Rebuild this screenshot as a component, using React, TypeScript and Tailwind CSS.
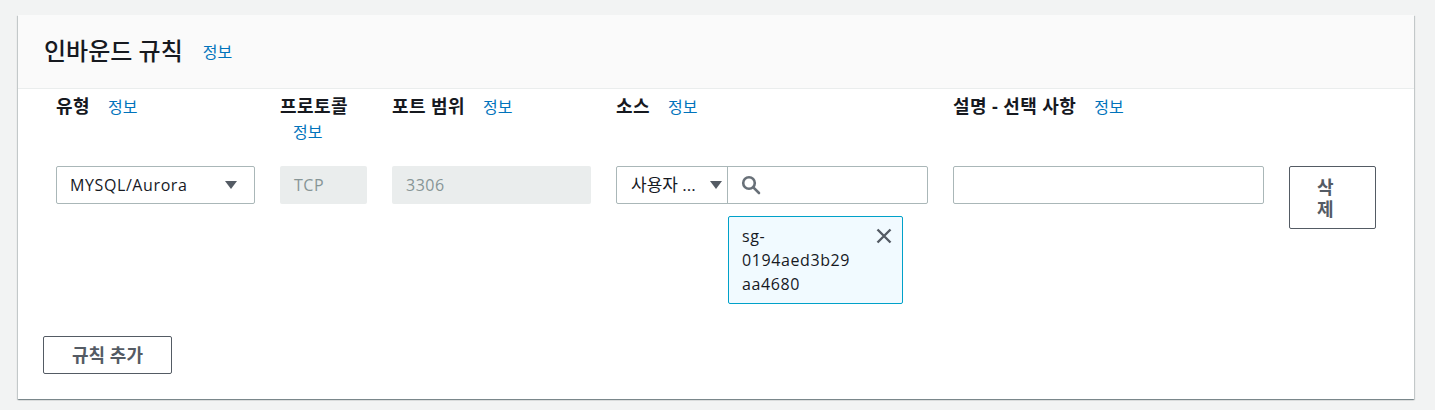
import React from "react";

const font = { fontFamily: '"Open Sans", "Noto Sans CJK KR", sans-serif' };

function InfoLink({ className = "" }: { className?: string }) {
  return (
    <a className={`inline-block text-[16px] font-normal text-[#0073bb] ${className}`}>정보</a>
  );
}

function Caret() {
  return (
    <svg width="12" height="9" viewBox="0 0 12 9" className="shrink-0">
      <path d="M0 0h12L6 8z" fill="#545b64" />
    </svg>
  );
}

function SearchIcon() {
  return (
    <svg width="20" height="20" viewBox="0 0 20 20" fill="none" stroke="#687078" strokeWidth="2.6">
      <circle cx="8" cy="8" r="5.8" />
      <path d="M12.3 12.3L18 18" strokeLinecap="round" />
    </svg>
  );
}

function CloseIcon() {
  return (
    <svg width="16" height="16" viewBox="0 0 16 16" fill="none" stroke="#545b64" strokeWidth="2.4">
      <path d="M1.5 1.5l13 13M14.5 1.5l-13 13" />
    </svg>
  );
}

export default function App() {
  return (
    <div className="h-[410px] bg-[#f2f3f3] pt-[15px] pl-[18px] pr-[21px] text-[#16191f]" style={font}>
      <div className="bg-white shadow-[0_1px_1px_0_rgba(0,28,36,0.3),1px_1px_1px_0_rgba(0,28,36,0.15),-1px_1px_1px_0_rgba(0,28,36,0.15)]">
        {/* Header */}
        <div className="flex h-[74px] items-center border-b border-[#eaeded] bg-[#fafafa] px-[26px] pb-[2px]">
          <h2 className="text-[24px] font-medium leading-[30px]">인바운드 규칙</h2>
          <InfoLink className="ml-[20px] mt-[2px]" />
        </div>

        {/* Rules */}
        <div className="px-[25px] pb-[25px] pt-[5px]">
          <div className="ml-[13px] grid grid-cols-[199px_87px_199px_312px_311px_87px] gap-x-[25px] gap-y-[21px]">
            <div className="text-[18px] font-bold leading-[25px] tracking-[0.4px]">
              유형 <InfoLink className="ml-[13px] tracking-normal" />
            </div>
            <div className="text-[18px] font-bold leading-[25px] tracking-[0.4px]">
              프로토콜 <InfoLink className="ml-[13px] tracking-normal" />
            </div>
            <div className="text-[18px] font-bold leading-[25px] tracking-[0.4px]">
              포트 범위 <InfoLink className="ml-[13px] tracking-normal" />
            </div>
            <div className="text-[18px] font-bold leading-[25px] tracking-[0.4px]">
              소스 <InfoLink className="ml-[13px] tracking-normal" />
            </div>
            <div className="text-[18px] font-bold leading-[25px] tracking-[0.4px]">
              설명 - 선택 사항 <InfoLink className="ml-[13px] tracking-normal" />
            </div>
            <div />

            {/* Type */}
            <div className="flex h-[38px] items-center justify-between rounded-[2px] border border-[#aab7b8] pl-[13px] pr-[17px] text-[16px] tracking-[0.6px]">
              <span>MYSQL/Aurora</span>
              <Caret />
            </div>

            {/* Protocol */}
            <div className="flex h-[38px] items-center rounded-[2px] bg-[#eaeded] px-[14px] text-[16px] tracking-[0.5px] text-[#879596]">
              TCP
            </div>

            {/* Port range */}
            <div className="flex h-[38px] items-center rounded-[2px] bg-[#eaeded] px-[14px] text-[16px] tracking-[0.5px] text-[#879596]">
              3306
            </div>

            {/* Source */}
            <div className="flex flex-col">
              <div className="flex h-[38px] rounded-[2px] border border-[#aab7b8]">
                <div className="flex w-[111px] items-center justify-between border-r border-[#aab7b8] pl-[14px] pr-[5px]">
                  <span className="whitespace-nowrap text-[17px]">사용자 ...</span>
                  <Caret />
                </div>
                <div className="flex flex-1 items-center pl-[13px]">
                  <SearchIcon />
                </div>
              </div>
              <div className="ml-[112px] mt-[12px] flex w-[175px] justify-between rounded-[2px] border border-[#00a1c9] bg-[#f1faff] pb-[7px] pl-[13px] pr-[10px] pt-[7px] text-[16px] leading-[24px] tracking-[0.6px]">
                <span className="w-[125px]">sg-<br />0194aed3b29<br />aa4680</span>
                <button className="mt-[4px] h-[16px]">
                  <CloseIcon />
                </button>
              </div>
            </div>

            {/* Description */}
            <div className="h-[38px] rounded-[2px] border border-[#aab7b8]" />

            {/* Delete */}
            <div>
              <button className="w-[87px] rounded-[2px] border border-[#545b64] bg-white py-[8.5px] pl-[27px] pr-[30px] text-left text-[18px] font-bold leading-[22px] text-[#545b64]">
                삭제
              </button>
            </div>
          </div>

          <button className="mt-[32px] h-[38px] w-[129px] rounded-[2px] border border-[#545b64] bg-white text-[18px] font-bold text-[#545b64]">
            규칙 추가
          </button>
        </div>
      </div>
    </div>
  );
}
